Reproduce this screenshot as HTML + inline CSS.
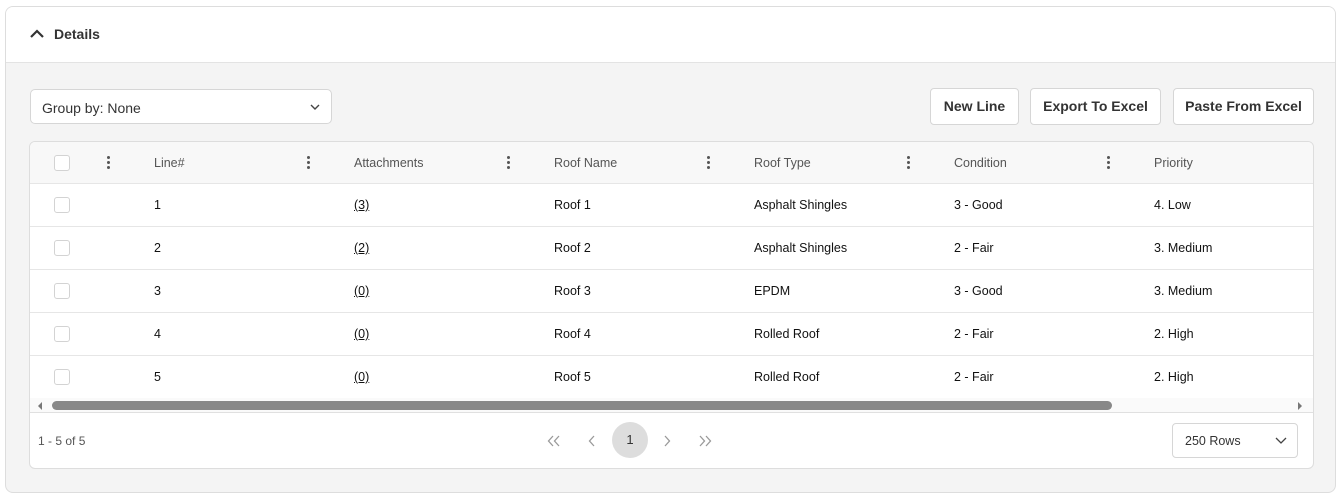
<!DOCTYPE html>
<html><head><style>
*{box-sizing:border-box;margin:0;padding:0}
body{width:1341px;height:498px;background:#fff;font-family:"Liberation Sans",Arial,sans-serif;color:#222;position:relative;overflow:hidden}
.card{position:absolute;left:5px;top:6px;width:1331px;height:487px;border:1px solid #ddd;border-radius:8px;background:#f4f4f4;overflow:hidden}
.hdr{height:56px;background:#fff;border-bottom:1px solid #e3e3e3;position:relative}
.hdr span{position:absolute;left:48px;top:19px;font-size:14px;font-weight:bold;color:#333}
.abs{position:absolute}
.sel{left:24px;top:82px;width:302px;height:35px;background:#fff;border:1px solid #d6d6d6;border-radius:5px;font-size:14px;color:#333;padding:10px 11px}
.btn{top:81px;height:37px;background:#fff;border:1px solid #d6d6d6;border-radius:4px;font-size:14px;font-weight:bold;color:#333;text-align:center;line-height:35px}
.grid{left:23px;top:134px;width:1285px;height:328px;background:#fff;border:1px solid #ddd;border-radius:6px;overflow:hidden}
.row{position:absolute;left:0;width:100%;height:43px;border-bottom:1px solid #e6e6e6;font-size:12.5px;color:#111}
.row div{position:absolute;top:14px}
.th{background:#f8f8f8;height:42px;color:#555}
.cb{width:16px;height:16px;border:1px solid #d3d3d3;border-radius:3px;top:13px!important;left:24px;background:#fff}
.dots{width:3px;top:14px!important}
.dots i{display:block;width:3px;height:3px;background:#555;border-radius:50%;margin-bottom:2px}
</style></head><body>
<div class="card">
<div class="hdr"><svg class="abs" style="left:23px;top:21px" width="16" height="12" viewBox="0 0 16 12"><path d="M2 9 L8 3 L14 9" stroke="#333" stroke-width="2.2" fill="none"/></svg><span>Details</span></div>
<div class="abs sel">Group by: None<svg class="abs" style="right:10px;top:13px" width="12" height="8" viewBox="0 0 12 8"><path d="M2 2 L6 6 L10 2" stroke="#444" stroke-width="1.4" fill="none"/></svg></div>
<div class="abs btn" style="left:924px;width:89px">New Line</div>
<div class="abs btn" style="left:1024px;width:131px">Export To Excel</div>
<div class="abs btn" style="left:1167px;width:141px">Paste From Excel</div>
<div class="abs grid">
<div class="row th" style="top:0">
<div class="cb"></div>
<div class="dots" style="left:77px"><i></i><i></i><i></i></div>
<div style="left:124px">Line#</div><div class="dots" style="left:277px"><i></i><i></i><i></i></div>
<div style="left:324px">Attachments</div><div class="dots" style="left:477px"><i></i><i></i><i></i></div>
<div style="left:524px">Roof Name</div><div class="dots" style="left:677px"><i></i><i></i><i></i></div>
<div style="left:724px">Roof Type</div><div class="dots" style="left:877px"><i></i><i></i><i></i></div>
<div style="left:924px">Condition</div><div class="dots" style="left:1077px"><i></i><i></i><i></i></div>
<div style="left:1124px">Priority</div>
</div>
<div class="row" style="top:42px"><div class="cb"></div><div style="left:124px">1</div><div style="left:324px;text-decoration:underline">(3)</div><div style="left:524px">Roof 1</div><div style="left:724px">Asphalt Shingles</div><div style="left:924px">3 - Good</div><div style="left:1124px">4. Low</div></div>
<div class="row" style="top:85px"><div class="cb"></div><div style="left:124px">2</div><div style="left:324px;text-decoration:underline">(2)</div><div style="left:524px">Roof 2</div><div style="left:724px">Asphalt Shingles</div><div style="left:924px">2 - Fair</div><div style="left:1124px">3. Medium</div></div>
<div class="row" style="top:128px"><div class="cb"></div><div style="left:124px">3</div><div style="left:324px;text-decoration:underline">(0)</div><div style="left:524px">Roof 3</div><div style="left:724px">EPDM</div><div style="left:924px">3 - Good</div><div style="left:1124px">3. Medium</div></div>
<div class="row" style="top:171px"><div class="cb"></div><div style="left:124px">4</div><div style="left:324px;text-decoration:underline">(0)</div><div style="left:524px">Roof 4</div><div style="left:724px">Rolled Roof</div><div style="left:924px">2 - Fair</div><div style="left:1124px">2. High</div></div>
<div class="row" style="top:214px;border:none"><div class="cb"></div><div style="left:124px">5</div><div style="left:324px;text-decoration:underline">(0)</div><div style="left:524px">Roof 5</div><div style="left:724px">Rolled Roof</div><div style="left:924px">2 - Fair</div><div style="left:1124px">2. High</div></div>
<div class="abs" style="left:0;top:256px;width:100%;height:15px;background:#fafafa;border-bottom:1px solid #e0e0e0"></div>
<div class="abs" style="left:8px;top:260px;width:0;height:0;border-top:4px solid transparent;border-bottom:4px solid transparent;border-right:4px solid #777"></div>
<div class="abs" style="left:1268px;top:260px;width:0;height:0;border-top:4px solid transparent;border-bottom:4px solid transparent;border-left:4px solid #777"></div>
<div class="abs" style="left:22px;top:259px;width:1060px;height:9px;background:#888;border-radius:5px"></div>
<div class="abs" style="left:8px;top:292px;font-size:12px;color:#555">1 - 5 of 5</div>
<svg class="abs" style="left:517px;top:293px" width="14" height="12" viewBox="0 0 14 12"><path d="M6 1 L1.5 6 L6 11 M12 1 L7.5 6 L12 11" stroke="#999" stroke-width="1.3" fill="none"/></svg>
<svg class="abs" style="left:558px;top:293px" width="8" height="12" viewBox="0 0 8 12"><path d="M6 1 L1.5 6 L6 11" stroke="#999" stroke-width="1.3" fill="none"/></svg>
<div class="abs" style="left:582px;top:280px;width:36px;height:36px;border-radius:50%;background:#ddd;text-align:center;line-height:36px;font-size:13px;color:#333">1</div>
<svg class="abs" style="left:633px;top:293px" width="8" height="12" viewBox="0 0 8 12"><path d="M2 1 L6.5 6 L2 11" stroke="#999" stroke-width="1.3" fill="none"/></svg>
<svg class="abs" style="left:668px;top:293px" width="14" height="12" viewBox="0 0 14 12"><path d="M2 1 L6.5 6 L2 11 M8 1 L12.5 6 L8 11" stroke="#999" stroke-width="1.3" fill="none"/></svg>
<div class="abs" style="left:1142px;top:281px;width:126px;height:35px;border:1px solid #d6d6d6;border-radius:4px;font-size:12.5px;color:#333;padding:10px 12px">250 Rows<svg class="abs" style="right:10px;top:13px" width="12" height="8" viewBox="0 0 12 8"><path d="M1 1 L6 6 L11 1" stroke="#444" stroke-width="1.3" fill="none"/></svg></div>
</div>
</div>
</body></html>
